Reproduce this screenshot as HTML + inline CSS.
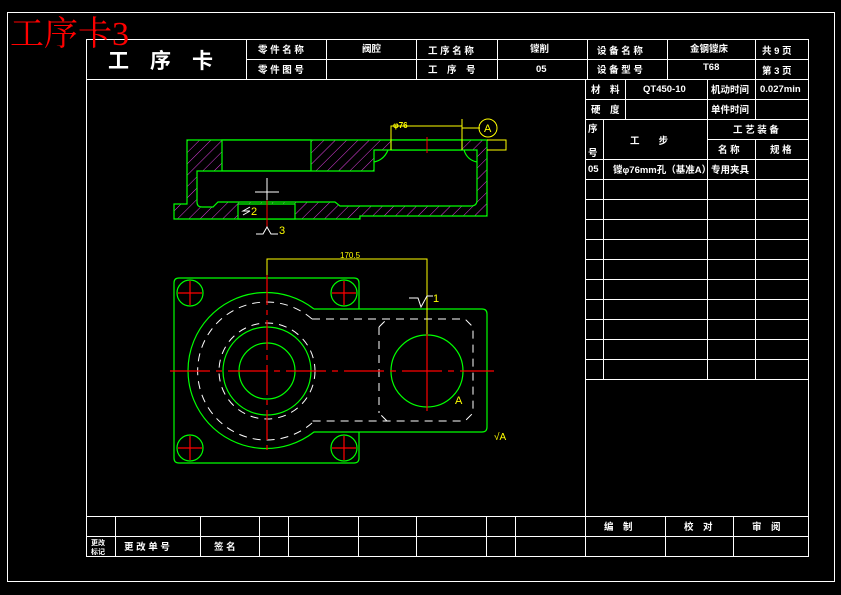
<!DOCTYPE html>
<html><head><meta charset="utf-8"><style>
html,body{margin:0;padding:0;background:#000;width:841px;height:595px;overflow:hidden}
svg{display:block}
text{font-family:"Liberation Sans","Noto Sans CJK SC",sans-serif;fill:#fff;font-weight:bold}
</style></head><body>
<svg width="841" height="595" viewBox="0 0 841 595" xmlns="http://www.w3.org/2000/svg">
<defs>
<pattern id="h" patternUnits="userSpaceOnUse" width="8" height="8" patternTransform="rotate(45)">
<line x1="0" y1="0" x2="0" y2="8" stroke="#e040e0" stroke-width="1"/>
</pattern>
</defs>
<g stroke="#fff" stroke-width="1" fill="none">
<rect x="7.5" y="12.5" width="827" height="569"/>
<rect x="86.5" y="39.5" width="722" height="517"/>
<line x1="86" y1="79.5" x2="809" y2="79.5"/>
<line x1="246" y1="59.5" x2="809" y2="59.5"/>
<line x1="246.5" y1="39" x2="246.5" y2="79"/>
<line x1="326.5" y1="39" x2="326.5" y2="79"/>
<line x1="416.5" y1="39" x2="416.5" y2="79"/>
<line x1="497.5" y1="39" x2="497.5" y2="79"/>
<line x1="587.5" y1="39" x2="587.5" y2="79"/>
<line x1="667.5" y1="39" x2="667.5" y2="79"/>
<line x1="755.5" y1="39" x2="755.5" y2="79"/>
<line x1="585.5" y1="79" x2="585.5" y2="556"/>
<line x1="585" y1="99.5" x2="809" y2="99.5"/>
<line x1="585" y1="119.5" x2="809" y2="119.5"/>
<line x1="708" y1="139.5" x2="809" y2="139.5"/>
<line x1="585" y1="159.5" x2="809" y2="159.5"/>
<line x1="625.5" y1="79" x2="625.5" y2="119"/>
<line x1="707.5" y1="79" x2="707.5" y2="379"/>
<line x1="755.5" y1="79" x2="755.5" y2="119"/>
<line x1="755.5" y1="139" x2="755.5" y2="379"/>
<line x1="603.5" y1="119" x2="603.5" y2="379"/>
<path d="M585 179.5H809M585 199.5H809M585 219.5H809M585 239.5H809M585 259.5H809M585 279.5H809M585 299.5H809M585 319.5H809M585 339.5H809M585 359.5H809M585 379.5H809"/>
<line x1="86" y1="516.5" x2="809" y2="516.5"/>
<line x1="86" y1="536.5" x2="809" y2="536.5"/>
<path d="M115.5 516V556M200.5 516V556M259.5 516V556M288.5 516V556M358.5 516V556M416.5 516V556M486.5 516V556M515.5 516V556M665.5 516V556M733.5 516V556"/>
</g>
<text x="10" y="45" style="fill:#f00;font-weight:normal;font-family:'Liberation Serif','Noto Serif CJK SC',serif" font-size="34">工序卡3</text>
<text x="108" y="68" font-size="21">工　序　卡</text>
<g font-size="9.5">
<text x="258" y="53">零 件 名 称</text><text x="258" y="73">零 件 图 号</text>
<text x="362" y="52">阀腔</text>
<text x="428" y="54">工 序 名 称</text><text x="428" y="73">工　序　号</text>
<text x="530" y="52">镗削</text><text x="536" y="72">05</text>
<text x="597" y="54">设 备 名 称</text><text x="597" y="73">设 备 型 号</text>
<text x="690" y="52">金钢镗床</text><text x="703" y="70">T68</text>
<text x="762" y="54">共 9 页</text><text x="762" y="74">第 3 页</text>
<text x="591" y="93">材　料</text><text x="643" y="92">QT450-10</text>
<text x="711" y="93">机动时间</text><text x="760" y="92">0.027min</text>
<text x="591" y="113">硬　度</text><text x="711" y="113">单件时间</text>
<text x="588" y="132">序</text><text x="588" y="156">号</text>
<text x="630" y="144">工　　步</text>
<text x="733" y="133">工 艺 装 备</text>
<text x="718" y="153">名 称</text><text x="770" y="153">规 格</text>
<text x="588" y="172">05</text><text x="613" y="173">镗φ76mm孔（基准A）</text>
<text x="711" y="173">专用夹具</text>
<text x="604" y="530">编　制</text><text x="684" y="530">校　对</text><text x="752" y="530">审　阅</text>
<text x="91" y="545" font-size="7">更改</text><text x="91" y="554" font-size="7">标记</text>
<text x="124" y="550">更 改 单 号</text><text x="214" y="550">签 名</text>
</g>
<!-- section view -->
<g stroke="#0f0" stroke-width="1.2">
<path d="M187 140H487V216H360V219H174V204H187Z" fill="url(#h)"/>
<path d="M222 140H311V171H222Z" fill="#000"/>
<path d="M197 171H374V150H477V200Q477 206 471 206H340L335 202H218L213 207H202Q197 207 197 202Z" fill="#000"/>
<path d="M391 140H462V150H391Z" fill="#000"/>
<path d="M238 204H295V219H238Z" fill="#000"/>
<path d="M374 162Q384 160 388 150M464 150Q467 160 477 162" fill="none"/>
</g>
<g stroke="#ff0" fill="none" stroke-width="1">
<path d="M391 150V126H462M462 119V150M462 128H480M487 140H506V150H487"/>
<circle cx="488" cy="128" r="9"/>
</g>
<text x="393" y="128" font-size="8" style="fill:#ff0">φ76</text>
<text x="484" y="132" font-size="11" style="fill:#ff0;font-weight:normal">A</text>
<line x1="427" y1="137" x2="427" y2="153" stroke="#f00"/>
<line x1="267" y1="200" x2="267" y2="227" stroke="#f00"/>
<g stroke="#fff" fill="none"><path d="M255 192H279M267 178V200M250 211H243L250 207M250 211L243 215M256 234H263L267 227L271 234H278"/></g>
<text x="251" y="215" font-size="11" style="fill:#ff0;font-weight:normal">2</text>
<text x="279" y="234" font-size="11" style="fill:#ff0;font-weight:normal">3</text>
<!-- plan view -->
<g stroke="#0f0" stroke-width="1.2" fill="none">
<path d="M359 309V283Q359 278 354 278H179Q174 278 174 283V458Q174 463 179 463H354Q359 463 359 458V432"/>
<path d="M314 309H482Q487 309 487 314V427Q487 432 482 432H314 A78 78 0 1 1 314 309"/>
<circle cx="267" cy="371" r="44"/><circle cx="267" cy="371" r="28"/>
<circle cx="190" cy="293" r="13"/><circle cx="344" cy="293" r="13"/>
<circle cx="190" cy="448" r="13"/><circle cx="344" cy="448" r="13"/>
<circle cx="427" cy="371" r="36"/>
</g>
<g stroke="#fff" stroke-dasharray="8,6" fill="none">
<path d="M312 319H465L473 327V413L465 421H312"/>
<path d="M379 327V413M387 421L379 413M379 327L387 319"/>
<path d="M312 319A69 69 0 1 0 312 423"/>
<circle cx="267" cy="371" r="48"/>
</g>
<g stroke="#f00" stroke-width="1.2" fill="none">
<path d="M170 371H494" stroke-dasharray="40,6,6,6"/>
<path d="M267 275V452" stroke-dasharray="30,5,5,5"/>
<path d="M427 334V411"/>
<path d="M178 293H202M190 281V305M332 293H356M344 281V305M178 448H202M190 436V460M332 448H356M344 436V460"/>
</g>
<g stroke="#ff0" fill="none"><path d="M267 275V259H427V334"/></g>
<text x="340" y="258" font-size="8" style="fill:#ff0;font-weight:normal">170.5</text>
<path d="M409 298H418L421 307L427 296H433" stroke="#fff" fill="none"/>
<text x="433" y="302" font-size="11" style="fill:#ff0;font-weight:normal">1</text>
<text x="455" y="404" font-size="11" style="fill:#ff0;font-weight:normal">A</text>
<text x="494" y="440" font-size="10" style="fill:#ff0;font-weight:normal">√A</text>
</svg>
</body></html>
